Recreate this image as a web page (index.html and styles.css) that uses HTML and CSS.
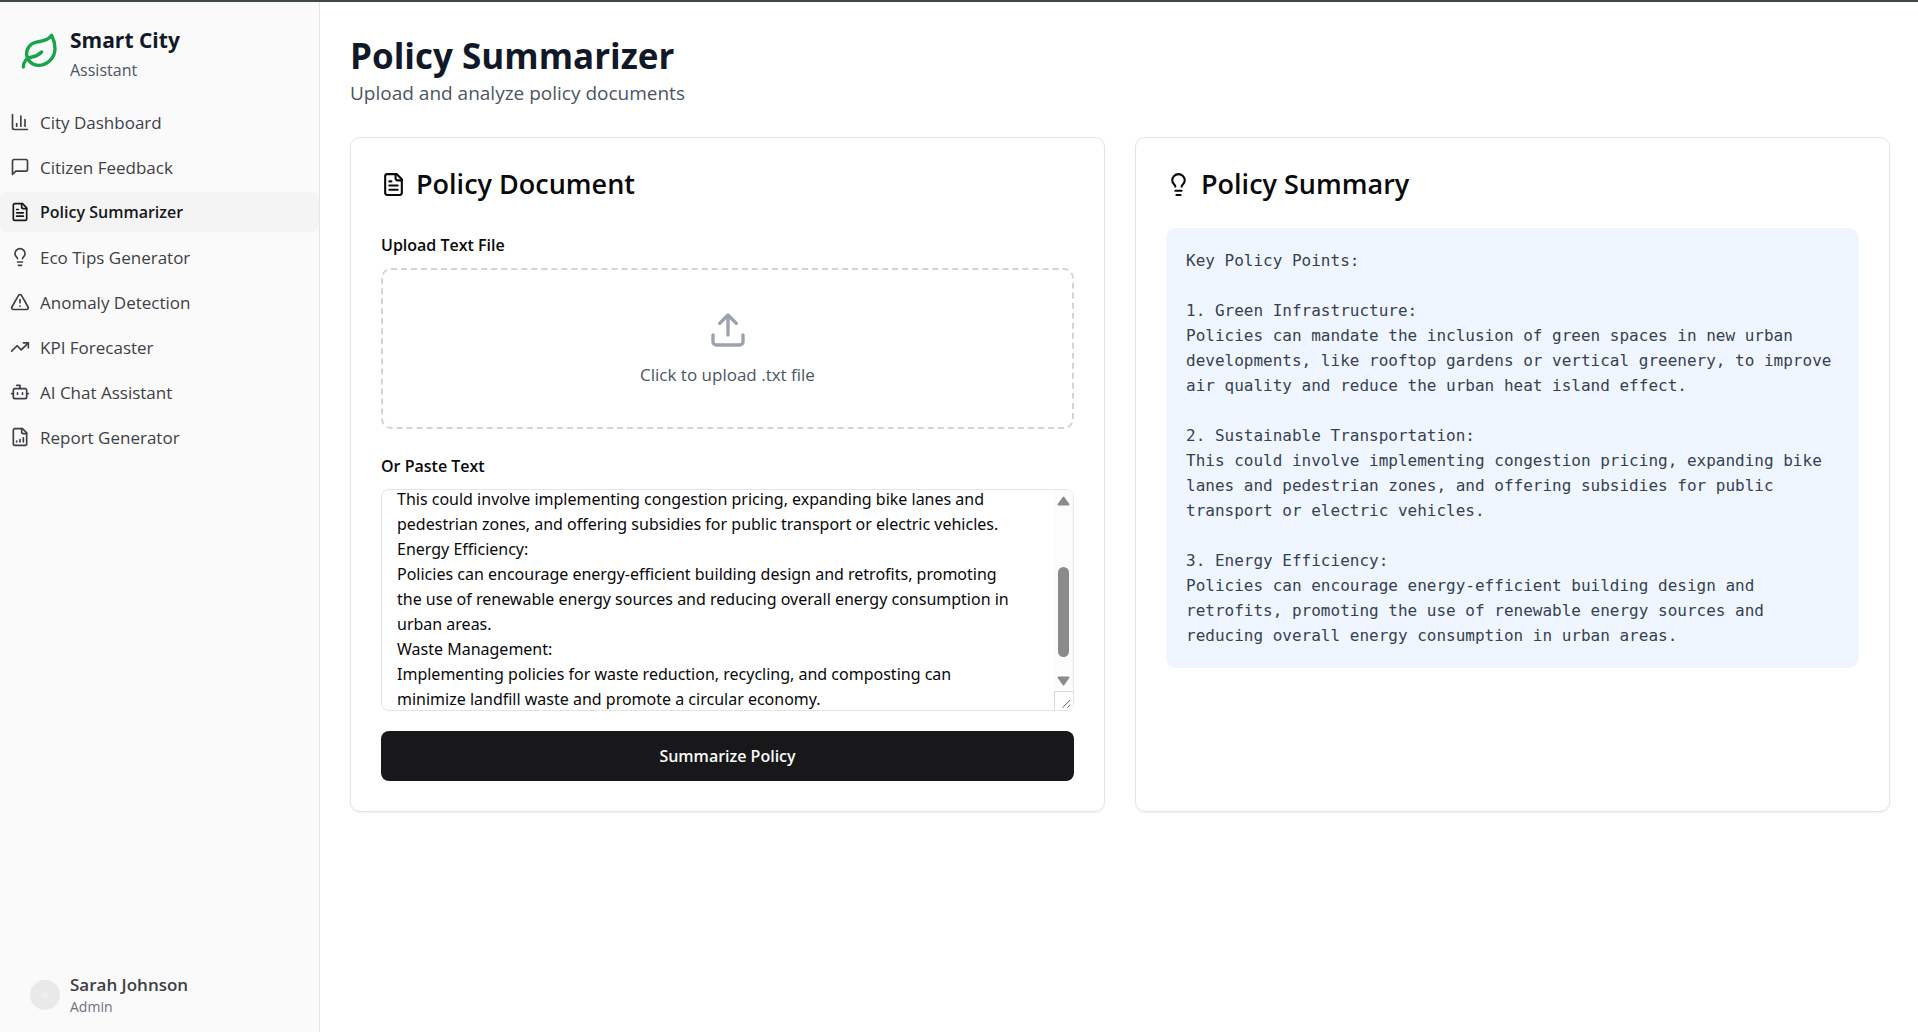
FILE: index.html
```html
<!DOCTYPE html>
<html lang="en">
<head>
<meta charset="utf-8">
<title>Policy Summarizer - Smart City Assistant</title>
<meta name="viewport" content="width=device-width, initial-scale=1">
<link rel="stylesheet" href="styles.css">
</head>
<body>
<div class="app">
  <aside class="sidebar">
    <div class="brand">
      <svg class="icon icon-brand" viewBox="0 0 24 24" aria-hidden="true"><path d="M11 20A7 7 0 0 1 9.800 6.100C15.500 5 17 4.480 19 2c1 2 2 4.180 2 8 0 5.500-4.780 10-10 10Z"/><path d="M2 21c0-3 1.850-5.360 5.080-6C9.500 14.520 12 13 13 12"/></svg>
      <div>
        <div class="brand-name">Smart City</div>
        <div class="brand-sub">Assistant</div>
      </div>
    </div>
    <nav class="nav">
      <a class="nav-item" href="#dashboard"><svg class="icon" viewBox="0 0 24 24" aria-hidden="true"><path d="M3 3v16a2 2 0 0 0 2 2h16M18 17V9M13 17V5M8 17v-3"/></svg>City Dashboard</a>
      <a class="nav-item" href="#feedback"><svg class="icon" viewBox="0 0 24 24" aria-hidden="true"><path d="M21 15a2 2 0 0 1-2 2H7l-4 4V5a2 2 0 0 1 2-2h14a2 2 0 0 1 2 2z"/></svg>Citizen Feedback</a>
      <a class="nav-item nav-item-active" href="#policy" aria-current="page"><svg class="icon" viewBox="0 0 24 24" aria-hidden="true"><path d="M15 2H6a2 2 0 0 0-2 2v16a2 2 0 0 0 2 2h12a2 2 0 0 0 2-2V7Z"/><path d="M14 2v4a2 2 0 0 0 2 2h4M10 9H8M16 13H8M16 17H8"/></svg>Policy Summarizer</a>
      <a class="nav-item" href="#eco"><svg class="icon" viewBox="0 0 24 24" aria-hidden="true"><path d="M15 14c.2-1 .7-1.700 1.500-2.500 1-.9 1.500-2.200 1.500-3.500A6 6 0 0 0 6 8c0 1 .2 2.200 1.500 3.500.7.7 1.300 1.500 1.500 2.500M9 18h6M10 22h4"/></svg>Eco Tips Generator</a>
      <a class="nav-item" href="#anomaly"><svg class="icon" viewBox="0 0 24 24" aria-hidden="true"><path d="m21.730 18-8-14a2 2 0 0 0-3.480 0l-8 14A2 2 0 0 0 4 21h16a2 2 0 0 0 1.730-3M12 9v4M12 17h.01"/></svg>Anomaly Detection</a>
      <a class="nav-item" href="#kpi"><svg class="icon" viewBox="0 0 24 24" aria-hidden="true"><path d="m22 7-8.500 8.500-5-5L2 17"/><path d="M16 7h6v6"/></svg>KPI Forecaster</a>
      <a class="nav-item" href="#chat"><svg class="icon" viewBox="0 0 24 24" aria-hidden="true"><path d="M12 8V4H8"/><rect width="16" height="12" x="4" y="8" rx="2"/><path d="M2 14h2M20 14h2M15 13v2M9 13v2"/></svg>AI Chat Assistant</a>
      <a class="nav-item" href="#report"><svg class="icon" viewBox="0 0 24 24" aria-hidden="true"><path d="M15 2H6a2 2 0 0 0-2 2v16a2 2 0 0 0 2 2h12a2 2 0 0 0 2-2V7Z"/><path d="M14 2v4a2 2 0 0 0 2 2h4M8 18v-1M12 18v-3M16 18v-5"/></svg>Report Generator</a>
    </nav>
    <div class="user">
      <span class="avatar"></span>
      <div>
        <div class="user-name">Sarah Johnson</div>
        <div class="user-role">Admin</div>
      </div>
    </div>
  </aside>

  <main class="main">
    <header>
      <h1 class="page-title">Policy Summarizer</h1>
      <p class="page-sub">Upload and analyze policy documents</p>
    </header>
    <div class="cards">
      <section class="card">
        <h2 class="card-title"><svg class="icon icon-title" viewBox="0 0 24 24" aria-hidden="true"><path d="M15 2H6a2 2 0 0 0-2 2v16a2 2 0 0 0 2 2h12a2 2 0 0 0 2-2V7Z"/><path d="M14 2v4a2 2 0 0 0 2 2h4M10 9H8M16 13H8M16 17H8"/></svg>Policy Document</h2>
        <form class="form">
          <div class="field">
            <label class="field-label" for="policy-file">Upload Text File</label>
            <input class="file-input" id="policy-file" type="file" accept=".txt">
            <label class="dropzone" for="policy-file">
              <svg class="icon icon-upload" viewBox="0 0 24 24" aria-hidden="true"><path d="M12 3v12M17 8l-5-5-5 5M21 15v4a2 2 0 0 1-2 2H5a2 2 0 0 1-2-2v-4"/></svg>
              <span>Click to upload .txt file</span>
            </label>
          </div>
          <div class="field">
            <label class="field-label" for="policy-text">Or Paste Text</label>
            <div class="textarea-wrap">
              <textarea class="textarea" id="policy-text" spellcheck="false">
Green Infrastructure:
Policies can mandate the inclusion of green spaces in new urban
developments, like rooftop gardens or vertical greenery, to improve air
quality and reduce the urban heat island effect.
Sustainable Transportation:
This could involve implementing congestion pricing, expanding bike lanes and
pedestrian zones, and offering subsidies for public transport or electric vehicles.
Energy Efficiency:
Policies can encourage energy-efficient building design and retrofits, promoting
the use of renewable energy sources and reducing overall energy consumption in
urban areas.
Waste Management:
Implementing policies for waste reduction, recycling, and composting can
minimize landfill waste and promote a circular economy.
</textarea>
              <div class="scrollbar" aria-hidden="true">
                <svg class="scroll-arrow" viewBox="0 0 13 10"><path d="M6.500 1.500 11.500 8.500H1.500Z"/></svg>
                <div class="scroll-track"><div class="scroll-thumb"></div></div>
                <svg class="scroll-arrow" viewBox="0 0 13 10"><path d="M6.500 8.500 11.500 1.500H1.500Z"/></svg>
                <svg class="scroll-grip" viewBox="0 0 19 19"><path d="M8 16.500 16 8.500M13 16.500l3-3"/></svg>
              </div>
            </div>
          </div>
          <button class="button" type="button">Summarize Policy</button>
        </form>
      </section>

      <section class="card">
        <h2 class="card-title"><svg class="icon icon-title" viewBox="0 0 24 24" aria-hidden="true"><path d="M15 14c.2-1 .7-1.700 1.500-2.500 1-.9 1.500-2.200 1.500-3.500A6 6 0 0 0 6 8c0 1 .2 2.200 1.500 3.500.7.7 1.300 1.500 1.500 2.500M9 18h6M10 22h4"/></svg>Policy Summary</h2>
        <pre class="summary">Key Policy Points:

1. Green Infrastructure:
Policies can mandate the inclusion of green spaces in new urban developments, like rooftop gardens or vertical greenery, to improve air quality and reduce the urban heat island effect.

2. Sustainable Transportation:
This could involve implementing congestion pricing, expanding bike lanes and pedestrian zones, and offering subsidies for public transport or electric vehicles.

3. Energy Efficiency:
Policies can encourage energy-efficient building design and retrofits, promoting the use of renewable energy sources and reducing overall energy consumption in urban areas.</pre>
      </section>
    </div>
  </main>
</div>
<script src="script.js"></script>
</body>
</html>
```
FILE: script.js
```js
// Keeps the drawn scrollbar thumb in step with the policy text box.
const area = document.getElementById('policy-text');
const track = document.querySelector('.scroll-track');
const thumb = document.querySelector('.scroll-thumb');

function syncThumb() {
  const scale = track.clientHeight / area.scrollHeight;
  thumb.style.height = Math.round(area.clientHeight * scale) + 'px';
  thumb.style.marginTop = Math.round(area.scrollTop * scale) + 'px';
}

area.addEventListener('scroll', syncThumb);
area.addEventListener('input', syncThumb);
area.scrollTop = 138;
syncThumb();
```
FILE: styles.css
```css
*, *::before, *::after { box-sizing: border-box; }

body {
  margin: 0;
  font-family: "Segoe UI", "Open Sans", "Noto Sans", sans-serif;
  font-size: 16px;
  line-height: 25px;
  color: #09090b;
  background: #fff;
}

h1, h2, p, pre { margin: 0; }

.app {
  display: flex;
  min-height: 100vh;
  border-top: 2px solid #3f4a44;
}

.icon {
  flex: none;
  width: 20px;
  height: 20px;
  fill: none;
  stroke: currentColor;
  stroke-width: 2;
  stroke-linecap: round;
  stroke-linejoin: round;
}

/* Sidebar */
.sidebar {
  display: flex;
  flex-direction: column;
  flex: none;
  width: 320px;
  background: #fafafa;
  border-right: 1px solid #e5e5e8;
  color: #3f3f46;
}

.brand {
  display: flex;
  align-items: center;
  gap: 10px;
  padding: 20px;
}

.icon-brand { width: 40px; height: 40px; color: #16a34a; }

.brand-name {
  font-size: 21px;
  font-weight: 700;
  line-height: 36px;
  color: #111827;
}

.brand-sub { line-height: 24px; color: #4b5563; }

.nav { display: grid; gap: 5px; }

.nav-item {
  display: flex;
  align-items: center;
  gap: 10px;
  height: 40px;
  padding: 0 10px;
  border-radius: 8px;
  color: inherit;
  font-size: 17px;
  text-decoration: none;
}

.nav-item-active {
  background: #f4f4f5;
  color: #18181b;
  font-size: 16px;
  font-weight: 600;
}

.user {
  display: flex;
  align-items: center;
  gap: 10px;
  margin-top: auto;
  padding: 15px 30px;
}

.avatar {
  width: 30px;
  height: 30px;
  border-radius: 50%;
  background: radial-gradient(circle, #f0f0f0 2px, #e9e9e9 4px);
}

.user-name { font-size: 17px; font-weight: 600; }
.user-role { font-size: 14px; line-height: 20px; color: #6b7280; }

/* Main */
.main { flex: 1; min-width: 0; padding: 30px 28px 30px 30px; }

.page-title {
  font-size: 35px;
  font-weight: 700;
  line-height: 48px;
  color: #111827;
}

.page-sub { font-size: 19px; line-height: 27px; color: #4b5563; }

.cards {
  display: grid;
  grid-template-columns: 1fr 1fr;
  gap: 30px;
  margin-top: 30px;
}

.card {
  min-width: 0;
  padding: 30px;
  border: 1px solid #e4e4e7;
  border-radius: 10px;
  box-shadow: 0 1px 2px rgba(0, 0, 0, 0.06);
}

.card-title {
  display: flex;
  align-items: center;
  gap: 10px;
  margin-bottom: 28px;
  font-size: 27px;
  font-weight: 600;
  line-height: 32px;
}

.icon-title { width: 25px; height: 25px; }

.form { display: grid; gap: 20px; }

.field { display: grid; gap: 5px; }

.field-label { font-weight: 600; line-height: 35px; }

.file-input { position: absolute; opacity: 0; pointer-events: none; }

.dropzone {
  display: flex;
  flex-direction: column;
  align-items: center;
  gap: 12px;
  padding: 40px;
  border: 2px dashed #d1d5db;
  border-radius: 10px;
  color: #4b5563;
  font-size: 17px;
  cursor: pointer;
}

.icon-upload { width: 40px; height: 40px; color: #9ca3af; }

.textarea-wrap { position: relative; }

.textarea {
  display: block;
  width: 100%;
  height: 222px;
  padding: 10px 20px 10px 15px;
  border: 1px solid #e4e4e7;
  border-radius: 8px;
  background: #fff;
  color: inherit;
  font-family: "Segoe UI", "Noto Sans", "Open Sans", sans-serif;
  font-size: 16px;
  line-height: 25px;
  resize: none;
  scrollbar-width: none;
}

/* Scrollbar laid over the right edge of the text box */
.scrollbar {
  position: absolute;
  inset: 1px 1px 1px auto;
  display: flex;
  flex-direction: column;
  align-items: center;
  width: 19px;
  padding-top: 5px;
  border-radius: 0 7px 7px 0;
  background: #fcfcfc;
  overflow: hidden;
  pointer-events: none;
}

.scroll-arrow {
  flex: none;
  width: 13px;
  height: 12px;
  fill: #8b8b8b;
  stroke: #8b8b8b;
  stroke-width: 2;
  stroke-linejoin: round;
}

.scroll-track { flex: 1; margin: 3px 0; }

.scroll-thumb {
  width: 11px;
  border-radius: 6px;
  background: #8b8b8b;
}

.scroll-grip {
  flex: none;
  width: 19px;
  height: 19px;
  margin-top: 4px;
  border: solid #d9d9d9;
  border-width: 1px 0 0 1px;
  background: #fff;
  fill: none;
  stroke: #555;
  stroke-width: 1;
}

.button {
  height: 50px;
  border: 0;
  border-radius: 8px;
  background: #18181b;
  color: #fafafa;
  font: inherit;
  font-weight: 600;
  cursor: pointer;
}

.summary {
  padding: 20px;
  border-radius: 10px;
  background: #eff6ff;
  color: #374151;
  font-family: Consolas, "DejaVu Sans Mono", "Liberation Mono", monospace;
  font-size: 16px;
  line-height: 25px;
  white-space: pre-wrap;
}
```
